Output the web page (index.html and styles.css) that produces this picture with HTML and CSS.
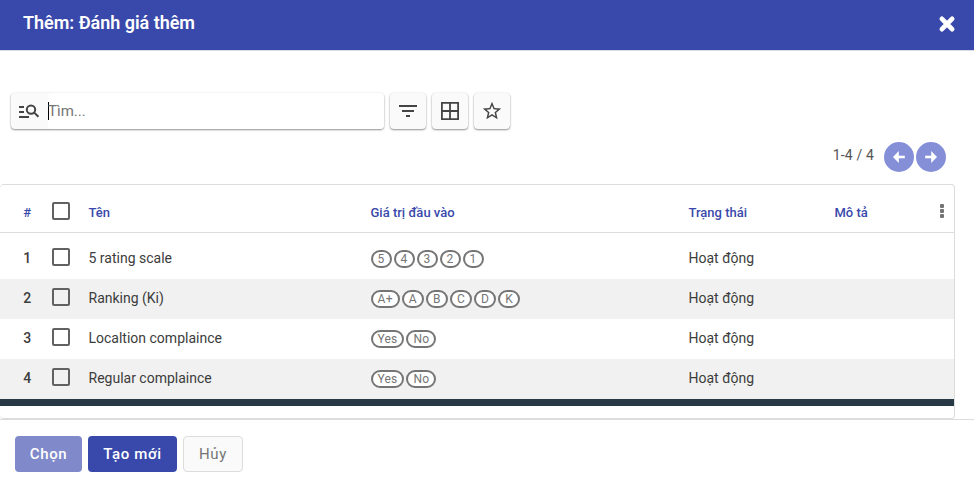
FILE: index.html
```html
<!DOCTYPE html>
<html lang="vi">
<head>
<meta charset="utf-8">
<title>Thêm: Đánh giá thêm</title>
<link rel="stylesheet" href="styles.css">
</head>
<body>
<div class="dialog">
  <header class="dialog-header">
    <h1 class="title">Thêm: Đánh giá thêm</h1>
    <svg class="close" viewBox="0 0 18 18"><path d="M3.9 3.9 14.1 14.1M14.1 3.9 3.9 14.1"/></svg>
  </header>
  <main class="dialog-body">
    <div class="toolbar">
      <div class="search">
        <span class="search-icon"><svg width="22" height="22" viewBox="0 0 22 22" fill="none" stroke="#444" stroke-width="2"><path d="M1 7h5M1 12h5M1 17h10M16 12.4l4.4 4.4"/><circle cx="13" cy="9.6" r="4.2"/></svg></span>
        <div class="search-field"><span class="placeholder">Tìm...</span></div>
      </div>
      <div class="tool"><svg width="24" height="24" viewBox="0 0 24 24" fill="#444"><path d="M10 18h4v-2h-4v2zM3 6v2h18V6H3zm3 7h12v-2H6v2z"/></svg></div>
      <div class="tool"><svg width="24" height="24" viewBox="0 0 24 24" fill="none" stroke="#444" stroke-width="1.8"><path d="M3.9 3.9h16.2v16.2H3.9zM12 4v16M4 12h16"/></svg></div>
      <div class="tool"><svg width="22" height="22" viewBox="0 0 24 24" fill="#444"><path d="M22 9.24l-7.19-.62L12 2 9.19 8.63 2 9.24l5.46 4.73L5.82 21 12 17.27 18.18 21l-1.63-7.03L22 9.24zM12 15.4l-3.76 2.27 1-4.28-3.32-2.88 4.38-.38L12 6.1l1.71 4.04 4.38.38-3.32 2.88 1 4.28L12 15.4z"/></svg></div>
    </div>
    <div class="pager">
      <span class="pager-text">1-4 / 4</span>
      <span class="page-btn"><svg width="14" height="14" viewBox="0 0 14 14"><path d="M12.8 7H5" stroke="#fff" stroke-width="2.6"/><path d="M1 7l5.8-6v12z" fill="#fff"/></svg></span>
      <span class="page-btn"><svg width="14" height="14" viewBox="0 0 14 14"><path d="M1.2 7H9" stroke="#fff" stroke-width="2.6"/><path d="M13 7L7.2 1v12z" fill="#fff"/></svg></span>
    </div>
    <section class="card">
      <div class="row head">
        <span class="num">#</span><span class="check"></span><span>Tên</span><span>Giá trị đầu vào</span><span>Trạng thái</span><span>Mô tả</span>
        <span class="dots"><i></i><i></i><i></i></span>
      </div>
      <div class="rows">
        <div class="row"><span class="num">1</span><span class="check"></span><span>5 rating scale</span><span class="tags"><b>5</b><b>4</b><b>3</b><b>2</b><b>1</b></span><span>Hoạt động</span></div>
        <div class="row"><span class="num">2</span><span class="check"></span><span>Ranking (Ki)</span><span class="tags letters"><b>A+</b><b>A</b><b>B</b><b>C</b><b>D</b><b>K</b></span><span>Hoạt động</span></div>
        <div class="row"><span class="num">3</span><span class="check"></span><span>Localtion complaince</span><span class="tags"><b>Yes</b><b>No</b></span><span>Hoạt động</span></div>
        <div class="row"><span class="num">4</span><span class="check"></span><span>Regular complaince</span><span class="tags"><b>Yes</b><b>No</b></span><span>Hoạt động</span></div>
      </div>
      <div class="scrollbar"></div>
    </section>
  </main>
  <footer class="dialog-footer">
    <button class="btn select">Chọn</button>
    <button class="btn create">Tạo mới</button>
    <button class="btn cancel">Hủy</button>
  </footer>
</div>
</body>
</html>
```
FILE: styles.css
```css
* { box-sizing: border-box; }
body { margin: 0; background: #fff; font-family: Roboto, "Liberation Sans", sans-serif; color: #3c3c3c; overflow: hidden; }
.dialog { display: flex; flex-direction: column; height: 485px; }
.dialog-header { display: flex; justify-content: space-between; height: 51px; padding: 0 18px 0 23px; background: #3949ab; border-bottom: 1px solid #d9dbe8; }
.title { margin: 12px 0 0; font-size: 18px; line-height: 22px; font-weight: 600; letter-spacing: -.03px; color: #fff; }
.close { width: 18px; height: 18px; margin-top: 14.5px; fill: none; stroke: #fff; stroke-width: 4.8; stroke-linecap: round; }
.dialog-body { height: 368px; padding-top: 42px; }
.toolbar { display: flex; gap: 6px; height: 36px; padding-left: 11px; }
.search, .tool { border-radius: 4px; background: #fafafa; box-shadow: 0 1px 2px rgba(0,0,0,.42), 0 0 2px rgba(0,0,0,.08); }
.search { display: flex; width: 373px; }
.search-icon { display: flex; align-items: center; width: 37px; padding-left: 7px; }
.search-field { display: flex; align-items: center; flex: 1; background: #fff; border-radius: 4px; }
.placeholder { height: 18px; border-left: 1px solid #000; font-size: 15px; line-height: 18px; text-indent: -1px; color: #757575; }
.tool { display: flex; align-items: center; justify-content: center; width: 36px; }
.pager { display: flex; align-items: center; justify-content: flex-end; gap: 2px; height: 30px; margin-top: 13px; padding-right: 28px; }
.pager-text { margin: -3px 8px 0 0; font-size: 14px; line-height: 17px; letter-spacing: .15px; color: #555; }
.page-btn { display: flex; align-items: center; justify-content: center; width: 30px; height: 30px; border-radius: 50%; background: #858fd8; }
.card { width: 955px; height: 235px; margin-top: 12px; border: solid #dcdcdc; border-width: 1px 1px 1px 0; border-radius: 4px; }
.row { display: grid; grid-template-columns: 51.5px 37px 282px 318px 146px 96px 1fr; align-items: center; height: 40px; padding-bottom: 2px; font-size: 14px; line-height: 20px; }
.row:nth-child(even) { background: #f1f1f1; }
.num { padding-left: 3px; text-align: center; font-weight: 500; }
.head { height: 48px; padding-top: 9px; padding-bottom: 0; border-bottom: 1px solid #dcdcdc; font-size: 13px; font-weight: 500; color: #3949ab; }
.check { width: 18px; height: 18px; margin-top: -3px; border: 2px solid #616161; border-radius: 2px; }
.head .check { margin-top: -5px; }
.dots { display: flex; flex-direction: column; gap: 1px; padding-left: 9px; margin-top: -4px; }
.dots i { width: 4px; height: 4px; border-radius: 1px; background: #757575; }
.rows { padding-top: 6px; }
.tags { display: flex; gap: 2px; padding-top: 2px; }
.tags b { min-width: 21px; height: 18px; padding: 0 5px; border: 2px solid #757575; border-radius: 9px; background: #fff; color: #757575; font-size: 12px; line-height: 14px; font-weight: 400; letter-spacing: .2px; text-align: center; }
.letters b { min-width: 22px; letter-spacing: .3px; }
.scrollbar { height: 7px; background: #263944; }
.dialog-footer { display: flex; gap: 6px; height: 66px; padding: 16px 15px; border-top: 1px solid #dcdcdc; }
.btn { height: 36px; padding: 0; border: 0; border-radius: 4px; font-family: inherit; font-size: 15px; font-weight: 500; letter-spacing: .65px; color: #fff; }
.select { width: 67px; background: #8089c9; }
.create { width: 89px; background: #3949ab; }
.cancel { width: 60px; border: 1px solid #dcdcdc; background: #fafafa; color: #757575; font-weight: 400; }
```
